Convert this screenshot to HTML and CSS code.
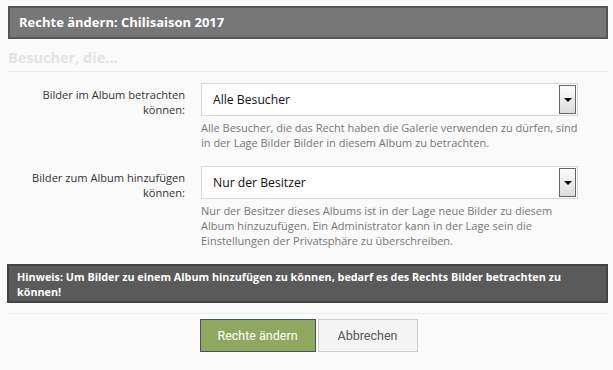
FILE: index.html
```html
<!DOCTYPE html>
<html lang="de">
<head>
<meta charset="utf-8">
<link rel="stylesheet" href="styles.css">
</head>
<body>
<div class="page">
  <div class="titlebar">Rechte ändern: Chilisaison 2017</div>
  <h2 class="section">Besucher, die...</h2>
  <div class="row row-first">
    <label class="label">Bilder im Album betrachten können:</label>
    <div class="field">
      <div class="select"><span class="value">Alle Besucher</span><span class="arrow"><i></i></span></div>
      <p class="desc">Alle Besucher, die das Recht haben die Galerie verwenden zu dürfen, sind in der Lage Bilder Bilder in diesem Album zu betrachten.</p>
    </div>
  </div>
  <div class="row">
    <label class="label">Bilder zum Album hinzufügen können:</label>
    <div class="field">
      <div class="select"><span class="value">Nur der Besitzer</span><span class="arrow"><i></i></span></div>
      <p class="desc">Nur der Besitzer dieses Albums ist in der Lage neue Bilder zu diesem Album hinzuzufügen. Ein Administrator kann in der Lage sein die Einstellungen der Privatsphäre zu überschreiben.</p>
    </div>
  </div>
  <div class="notice">Hinweis: Um Bilder zu einem Album hinzufügen zu können, bedarf es des Rechts Bilder betrachten zu können!</div>
  <div class="actions">
    <button class="btn btn-primary">Rechte ändern</button>
    <button class="btn btn-secondary">Abbrechen</button>
  </div>
</div>
</body>
</html>
```
FILE: styles.css
```css
html, body {
  margin: 0;
  padding: 0;
  background: #fafafa;
  font-family: "Open Sans", "Noto Sans", sans-serif;
}
.page {
  padding: 6px 5px 0 7px;
}
.titlebar {
  margin-left: 1px;
  height: 29px;
  border: 2px solid #555;
  background: #777;
  color: #fff;
  font-weight: bold;
  font-size: 13px;
  line-height: 29px;
  padding-left: 9px;
}
.section {
  margin: 0 0 0 1px;
  padding: 9px 0 4px;
  font-size: 14.5px;
  line-height: 19px;
  font-weight: bold;
  color: #e3e3e3;
  border-bottom: 1px solid #ececec;
}
.row {
  display: grid;
  grid-template-columns: 178px 377px;
  column-gap: 16px;
  margin-top: 16px;
}
.row-first {
  margin-top: 11px;
}
.label {
  text-align: right;
  font-size: 11.1px;
  line-height: 15px;
  color: #333;
  padding-top: 4px;
}
.select {
  height: 31px;
  border: 1px solid #d8d8d8;
  background: #fff;
  display: flex;
  align-items: center;
  justify-content: space-between;
  padding: 0 1px 0 11px;
}
.value {
  font-size: 12.2px;
  color: #111;
}
.arrow {
  width: 15px;
  height: 27px;
  border: 1px solid #666;
  background: linear-gradient(#fcfcfc, #dcdcdc);
  display: flex;
  align-items: center;
  justify-content: center;
}
.arrow i {
  width: 0;
  height: 0;
  border-left: 4px solid transparent;
  border-right: 4px solid transparent;
  border-top: 4px solid #000;
}
.desc {
  margin: 4px 0 0;
  font-size: 11px;
  line-height: 15px;
  color: #777;
}
.notice {
  margin-top: 16px;
  border: 2px solid #444;
  background: #5a5a5a;
  color: #fff;
  font-weight: bold;
  font-size: 10.8px;
  line-height: 15px;
  padding: 3px 8px 2px;
}
.actions {
  margin-top: 10px;
  border-top: 1px solid #ececec;
  padding-top: 5px;
  display: flex;
  justify-content: center;
  gap: 2px;
  padding-left: 2px;
}
.btn {
  font-family: "Roboto", "Liberation Sans", sans-serif;
  font-size: 12.5px;
  height: 33px;
  padding: 0;
  cursor: pointer;
}
.btn-primary {
  width: 116px;
  background: #8ea95f;
  color: #fff;
  border: 1px solid #3f556a;
}
.btn-secondary {
  width: 100px;
  background: #f4f4f4;
  color: #555;
  border: 1px solid #ccc;
}
```
